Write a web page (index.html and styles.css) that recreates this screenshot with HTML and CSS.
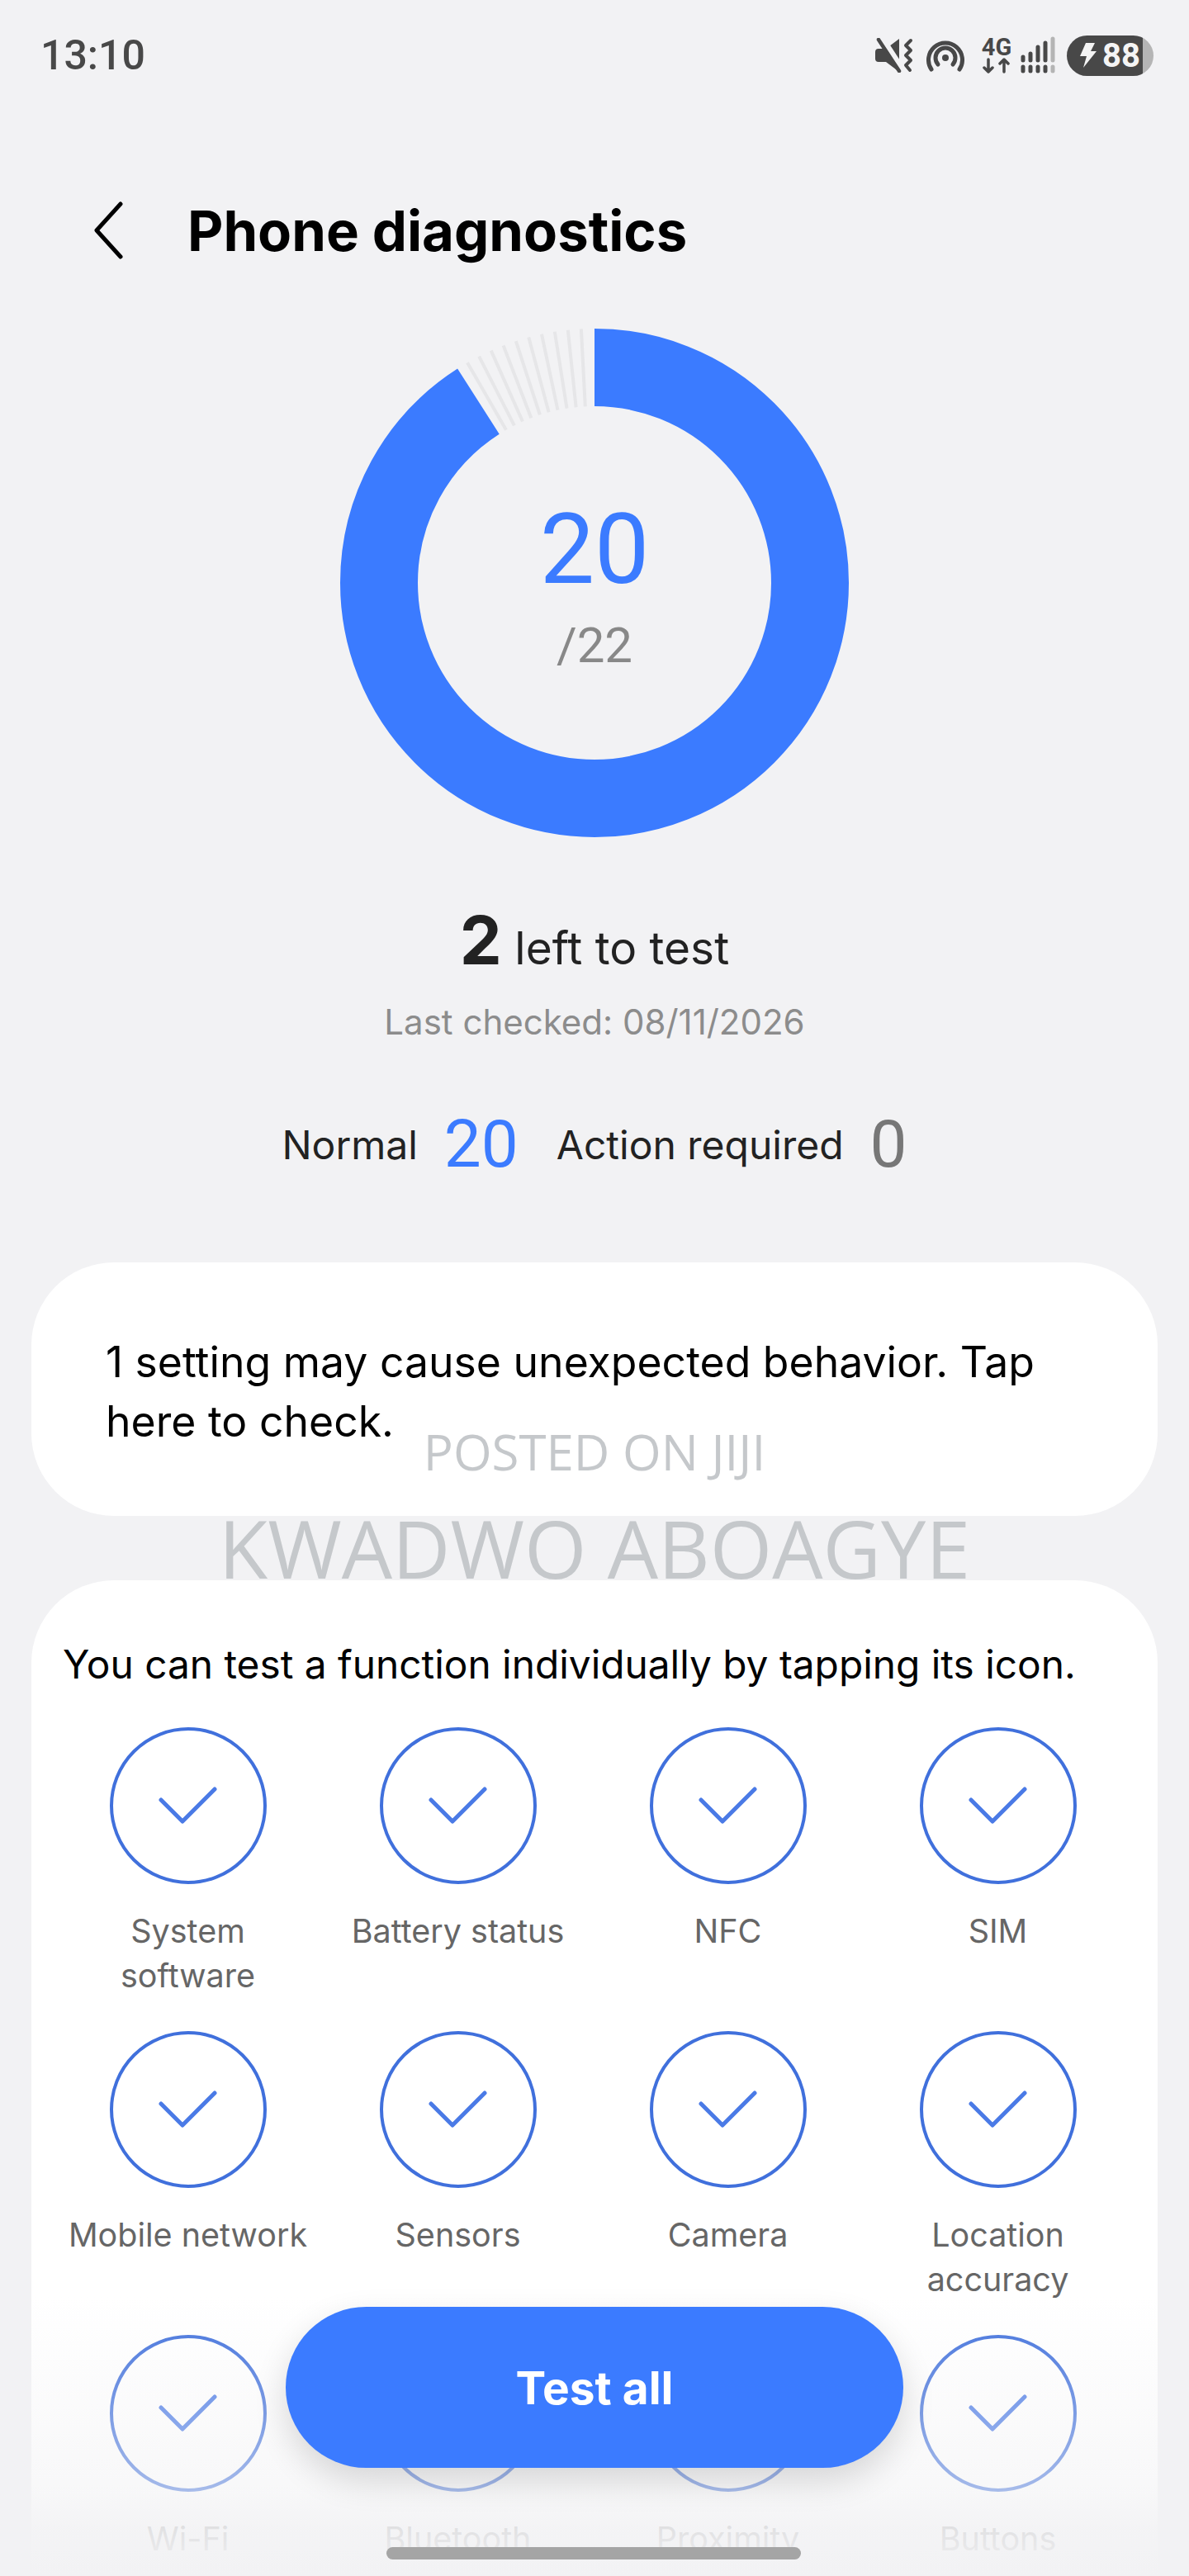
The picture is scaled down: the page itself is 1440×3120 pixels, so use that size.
FILE: index.html
```html
<!DOCTYPE html>
<html lang="en">
<head>
  <meta charset="UTF-8">
  <title>Phone diagnostics</title>
  <link rel="stylesheet" href="styles.css">
</head>
<body>

  <svg class="defs" width="0" height="0">
    <symbol id="check" viewBox="0 0 71 46">
      <path d="M3 16l26 26L68 3" fill="none" stroke="#4a7ae6" stroke-width="5" stroke-linecap="round" stroke-linejoin="round"/>
    </symbol>
  </svg>

  <div class="page">
    <div class="status-bar">
      <span class="time">13:10</span>
      <div class="status-icons">
        <svg class="ic-mute" width="46" height="42" viewBox="0 0 46 42">
          <path d="M0 17q0-4 4-4h9L29 1v40L13 29H4q-4 0-4-4z" fill="#484848"/>
          <path d="M7 0l26 40" stroke="#f2f2f4" stroke-width="9"/>
          <path d="M4 2l25 38" stroke="#484848" stroke-width="4.500" stroke-linecap="round"/>
          <path d="M43 3l-6 6 6 6-6 6 6 6-6 6 5 6" fill="none" stroke="#484848" stroke-width="4" stroke-linecap="round" stroke-linejoin="round"/>
        </svg>
        <svg class="ic-hotspot" width="46" height="40" viewBox="0 0 46 40">
          <g fill="none" stroke="#484848" stroke-width="5" stroke-linecap="round">
            <path d="M6 37A20.500 20.500 0 1 1 40 37"/>
            <path d="M14 31A12 12 0 1 1 32 31"/>
          </g>
          <circle cx="23" cy="23" r="4" fill="#484848"/>
        </svg>
        <div class="ic-net">
          <span>4G</span>
          <svg width="40" height="20" viewBox="0 0 40 20">
            <path d="M10 2v15M5 12l5 5 5-5M29 17V2M24 7l5-5 5 5" fill="none" stroke="#484848" stroke-width="3.500" stroke-linecap="round" stroke-linejoin="round"/>
          </svg>
        </div>
        <svg class="ic-signal" width="42" height="46" viewBox="0 0 42 46">
          <g fill="none" stroke="#484848" stroke-width="5" stroke-linecap="round">
            <path d="M3 25v4M12 21v8M21 13v16M30 8v21"/>
            <path d="M3 37v5M12 37v5M21 37v5M30 37v5"/>
          </g>
          <path d="M39 3v26M39 37v5" fill="none" stroke="#b4b4b4" stroke-width="5" stroke-linecap="round"/>
        </svg>
        <div class="battery">
          <svg width="24" height="32" viewBox="0 0 24 32"><path d="M10 1h11l-5 10h7L7 31l4-14H3z" fill="#f4f4f4"/></svg>
          <span>88</span>
        </div>
      </div>
    </div>

    <div class="header">
      <svg class="back" width="36" height="70" viewBox="0 0 36 70"><path d="M33 3L4 35l29 32" fill="none" stroke="#000" stroke-width="5" stroke-linecap="round" stroke-linejoin="round"/></svg>
      <h1>Phone diagnostics</h1>
    </div>

    <div class="donut">
      <svg width="616" height="616" viewBox="0 0 616 616">
        <circle cx="308" cy="308" r="261" fill="none" stroke="#3b7bff" stroke-width="94" stroke-dasharray="1490.800 1640" transform="rotate(-90 308 308)"/>
        <g stroke="#e6e6e8" stroke-width="4">
          <line x1="308" y1="0" x2="308" y2="94" transform="rotate(-3 308 308)"/>
          <line x1="308" y1="0" x2="308" y2="94" transform="rotate(-6 308 308)"/>
          <line x1="308" y1="0" x2="308" y2="94" transform="rotate(-9 308 308)"/>
          <line x1="308" y1="0" x2="308" y2="94" transform="rotate(-12 308 308)"/>
          <line x1="308" y1="0" x2="308" y2="94" transform="rotate(-15 308 308)"/>
          <line x1="308" y1="0" x2="308" y2="94" transform="rotate(-18 308 308)"/>
          <line x1="308" y1="0" x2="308" y2="94" transform="rotate(-21 308 308)"/>
          <line x1="308" y1="0" x2="308" y2="94" transform="rotate(-24 308 308)"/>
          <line x1="308" y1="0" x2="308" y2="94" transform="rotate(-27 308 308)"/>
          <line x1="308" y1="0" x2="308" y2="94" transform="rotate(-30 308 308)"/>
        </g>
      </svg>
      <div class="donut-text">
        <div class="donut-num">20</div>
        <div class="donut-of">/22</div>
      </div>
    </div>

    <div class="left-test"><b>2</b> left to test</div>
    <div class="last-checked">Last checked: 08/11/2026</div>

    <div class="counts">
      <span class="count-label">Normal</span>
      <span class="count-num blue">20</span>
      <span class="count-label second">Action required</span>
      <span class="count-num gray">0</span>
    </div>

    <div class="card notice">1 setting may cause unexpected behavior. Tap here to check.</div>

    <div class="card tests">
      <p class="tests-intro">You can test a function individually by tapping its icon.</p>
      <div class="grid">
        <div class="test"><div class="circle"><svg width="71" height="46"><use href="#check"/></svg></div><div class="test-name">System software</div></div>
        <div class="test"><div class="circle"><svg width="71" height="46"><use href="#check"/></svg></div><div class="test-name">Battery status</div></div>
        <div class="test"><div class="circle"><svg width="71" height="46"><use href="#check"/></svg></div><div class="test-name">NFC</div></div>
        <div class="test"><div class="circle"><svg width="71" height="46"><use href="#check"/></svg></div><div class="test-name">SIM</div></div>
        <div class="test"><div class="circle"><svg width="71" height="46"><use href="#check"/></svg></div><div class="test-name">Mobile network</div></div>
        <div class="test"><div class="circle"><svg width="71" height="46"><use href="#check"/></svg></div><div class="test-name">Sensors</div></div>
        <div class="test"><div class="circle"><svg width="71" height="46"><use href="#check"/></svg></div><div class="test-name">Camera</div></div>
        <div class="test"><div class="circle"><svg width="71" height="46"><use href="#check"/></svg></div><div class="test-name">Location accuracy</div></div>
        <div class="test"><div class="circle"><svg width="71" height="46"><use href="#check"/></svg></div><div class="test-name">Wi-Fi</div></div>
        <div class="test"><div class="circle"><svg width="71" height="46"><use href="#check"/></svg></div><div class="test-name">Bluetooth</div></div>
        <div class="test"><div class="circle"><svg width="71" height="46"><use href="#check"/></svg></div><div class="test-name">Proximity</div></div>
        <div class="test"><div class="circle"><svg width="71" height="46"><use href="#check"/></svg></div><div class="test-name">Buttons</div></div>
      </div>
    </div>

    <div class="watermark-top">POSTED ON JIJI</div>
    <div class="watermark-name">KWADWO ABOAGYE</div>
    <div class="fade"></div>
    <button class="test-all">Test all</button>
    <div class="home-bar"></div>
  </div>

</body>
</html>
```

FILE: styles.css
```css
body {
  margin: 0;
  background-color: #f2f2f4;
  font-family: Inter, "Liberation Sans", sans-serif;
}

.defs {
  position: absolute;
}

.page {
  position: relative;
  width: 1440px;
  height: 3120px;
  overflow: hidden;
}

.status-bar {
  display: flex;
  justify-content: space-between;
  align-items: center;
  height: 134px;
  padding: 0 43px 0 49px;
}

.time {
  font-family: Roboto, sans-serif;
  font-size: 50px;
  font-weight: 500;
  color: #484848;
}

.status-icons {
  display: flex;
  align-items: center;
}

.ic-hotspot { margin-left: 16px; }
.ic-signal { margin-left: 9px; }

.ic-net {
  display: flex;
  flex-direction: column;
  align-items: center;
  width: 40px;
  margin-left: 19px;
  font-family: Roboto, sans-serif;
  font-size: 29px;
  font-weight: 700;
  line-height: 25px;
  color: #484848;
}

.battery {
  display: flex;
  align-items: center;
  gap: 6px;
  width: 105px;
  height: 49px;
  margin-left: 14px;
  box-sizing: border-box;
  padding-left: 13px;
  border-radius: 25px;
  background: linear-gradient(to right, #484848 92px, #b5b5b5 92px);
  color: #f4f4f4;
  font-family: Roboto, sans-serif;
  font-size: 40px;
  font-weight: 700;
  line-height: 49px;
}

.header {
  display: flex;
  align-items: center;
  height: 90px;
  margin-top: 100px;
  padding-left: 113px;
}

.back {
  margin-right: 78px;
}

h1 {
  margin: 0;
  font-size: 67px;
  font-weight: 700;
  color: #000;
}

.donut {
  display: grid;
  place-items: center;
  width: 616px;
  height: 616px;
  margin: 74px auto 0;
}

.donut svg,
.donut-text {
  grid-area: 1 / 1;
}

.donut-text {
  padding-top: 11px;
  text-align: center;
  font-family: Roboto, sans-serif;
}

.donut-num {
  font-size: 118px;
  line-height: 130px;
  color: #3b7bff;
}

.donut-of {
  margin-top: 11px;
  font-size: 60px;
  line-height: 80px;
  color: #888;
}

.left-test {
  margin-top: 76px;
  text-align: center;
  font-size: 55px;
  color: #222;
}

.left-test b {
  font-size: 81px;
  font-weight: 700;
}

.last-checked {
  margin-top: 24px;
  text-align: center;
  font-size: 42px;
  color: #8c8c8c;
}

.counts {
  display: flex;
  justify-content: center;
  align-items: center;
  height: 90px;
  margin-top: 78px;
}

.count-label {
  font-size: 48px;
  color: #222;
}

.count-label.second {
  margin-left: 46px;
}

.count-num {
  margin-left: 32px;
  font-family: Roboto, sans-serif;
  font-size: 80px;
}

.blue { color: #3b7bff; }
.gray { color: #777; }

.card {
  position: relative;
  margin: 0 38px;
  background-color: #fff;
  border-radius: 100px;
}

.notice {
  box-sizing: border-box;
  height: 307px;
  margin-top: 98px;
  padding: 84px 90px 0;
  font-size: 51.700px;
  line-height: 72px;
  color: #000;
}

.tests {
  z-index: 1;
  height: 1400px;
  margin-top: 78px;
  padding: 70px 0 0 26px;
}

.tests-intro {
  margin: 0 0 0 12px;
  font-size: 47.800px;
  line-height: 64px;
  color: #000;
}

.grid {
  display: grid;
  grid-template-columns: repeat(4, 327px);
  grid-auto-rows: 368px;
  margin-top: 44px;
}

.test {
  display: flex;
  flex-direction: column;
  align-items: center;
}

.circle {
  display: flex;
  align-items: center;
  justify-content: center;
  width: 190px;
  height: 190px;
  box-sizing: border-box;
  border: 4px solid #4070dc;
  border-radius: 50%;
}

.test-name {
  width: 292px;
  margin-top: 30px;
  text-align: center;
  font-size: 39.500px;
  line-height: 54px;
  color: #666;
}

.watermark-top,
.watermark-name {
  position: absolute;
  left: 0;
  right: 0;
  text-align: center;
  font-family: "Open Sans", sans-serif;
  color: #c5c8cb;
}

.watermark-top {
  top: 1718px;
  font-size: 60px;
  line-height: 80px;
}

.watermark-name {
  top: 1806px;
  font-size: 97px;
  line-height: 136px;
}

.fade {
  position: absolute;
  z-index: 2;
  left: 0;
  right: 0;
  bottom: 0;
  height: 340px;
  background: linear-gradient(to bottom, rgba(242, 242, 244, 0), rgba(242, 242, 244, 0.55) 68%, rgba(242, 242, 244, 0.88) 83%, #f2f2f4 100%);
}

.test-all {
  position: absolute;
  z-index: 3;
  left: 346px;
  top: 2794px;
  width: 748px;
  height: 195px;
  border: none;
  border-radius: 98px;
  background-color: #3b7bff;
  box-shadow: 0 16px 40px rgba(0, 0, 0, 0.14);
  color: #fff;
  font-family: Inter, sans-serif;
  font-size: 55px;
  font-weight: 700;
}

.home-bar {
  position: absolute;
  z-index: 3;
  left: 468px;
  top: 3085px;
  width: 502px;
  height: 15px;
  border-radius: 8px;
  background-color: #a5a5a5;
}
```
